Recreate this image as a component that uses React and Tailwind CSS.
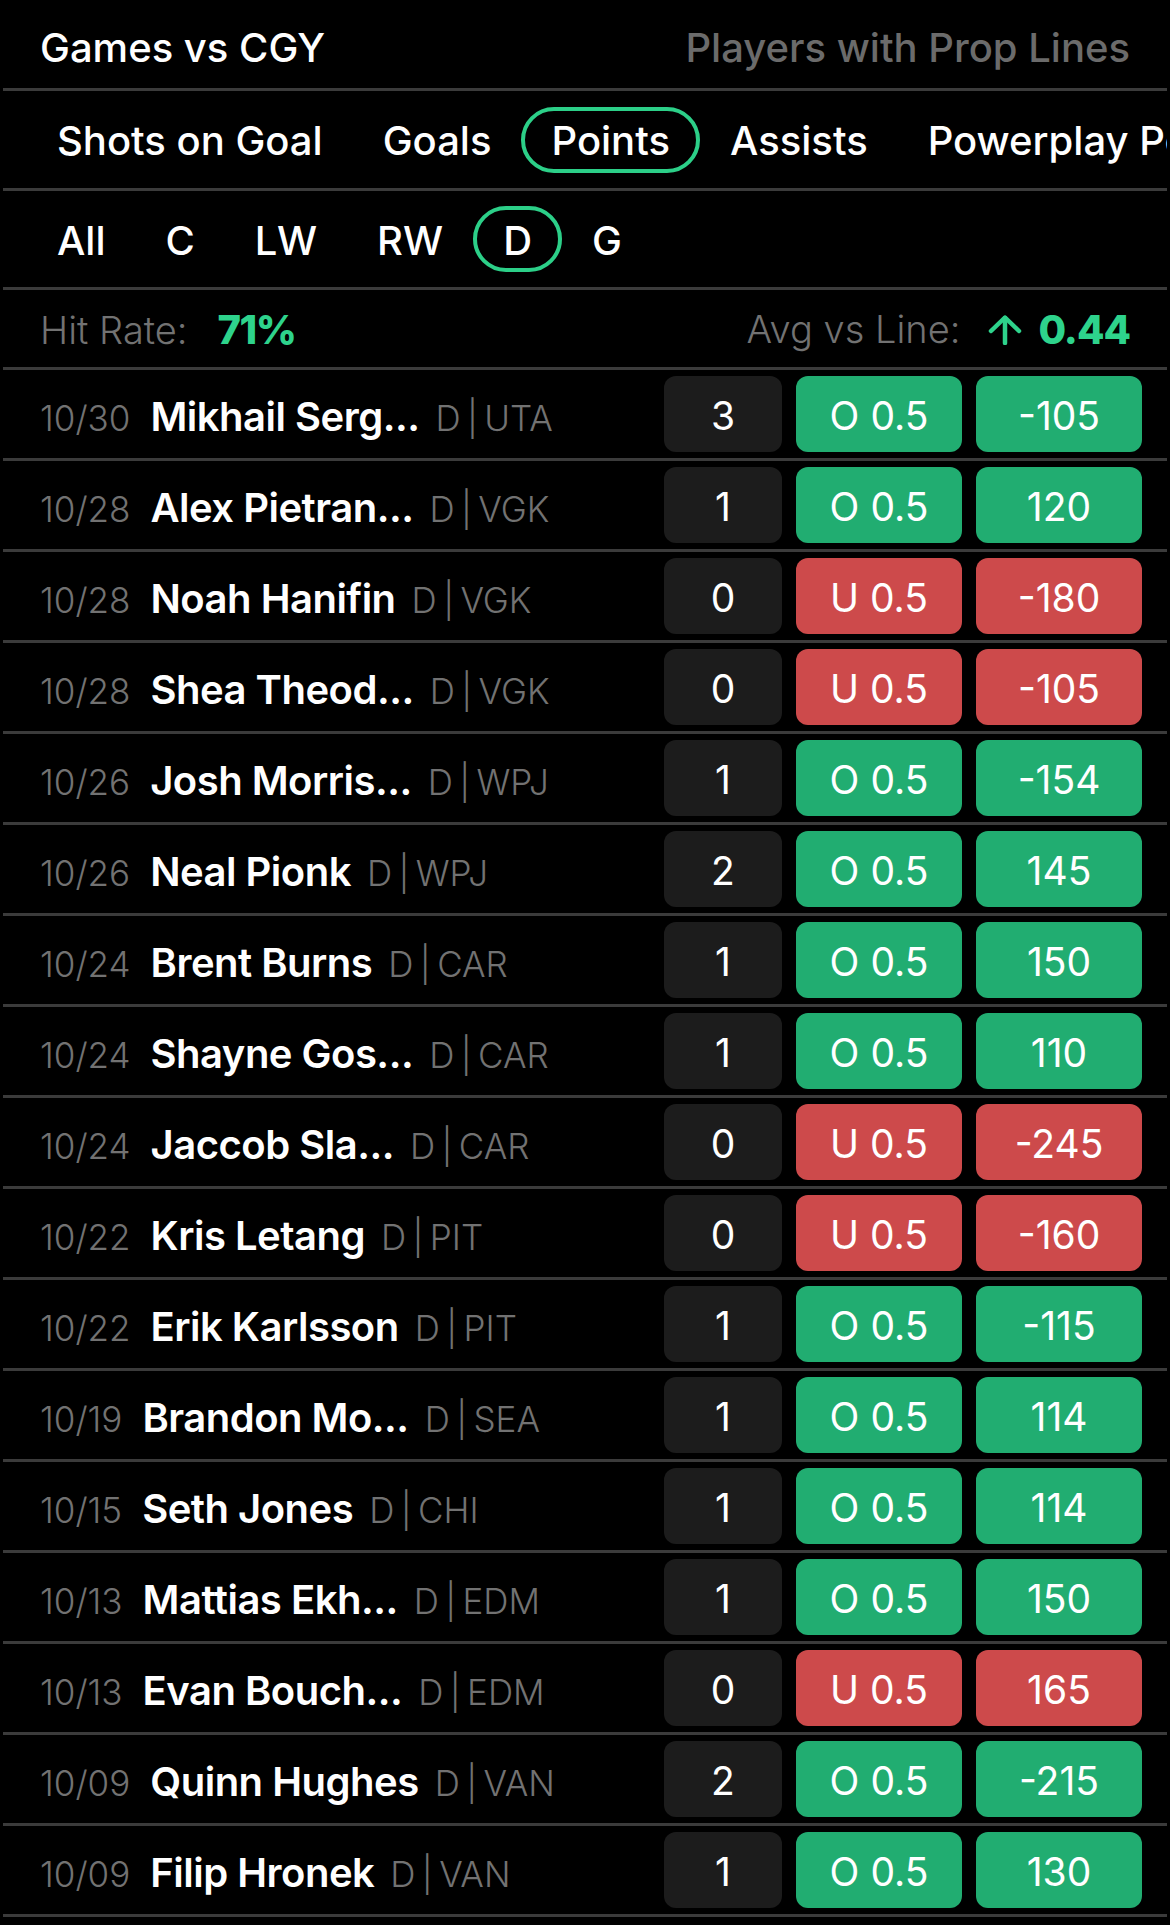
import { useState } from 'react'

const markets = ['Shots on Goal', 'Goals', 'Points', 'Assists', 'Powerplay Points', 'Blocked Shots']
const positions = ['All', 'C', 'LW', 'RW', 'D', 'G']

// one row per game vs CGY; hit = line went the player's way
const games = [
  { date: '10/30', name: 'Mikhail Serg...', team: 'UTA', pts: 3, hit: true, odds: '-105' },
  { date: '10/28', name: 'Alex Pietran...', team: 'VGK', pts: 1, hit: true, odds: '120' },
  { date: '10/28', name: 'Noah Hanifin', team: 'VGK', pts: 0, hit: false, odds: '-180' },
  { date: '10/28', name: 'Shea Theod...', team: 'VGK', pts: 0, hit: false, odds: '-105' },
  { date: '10/26', name: 'Josh Morris...', team: 'WPJ', pts: 1, hit: true, odds: '-154' },
  { date: '10/26', name: 'Neal Pionk', team: 'WPJ', pts: 2, hit: true, odds: '145' },
  { date: '10/24', name: 'Brent Burns', team: 'CAR', pts: 1, hit: true, odds: '150' },
  { date: '10/24', name: 'Shayne Gos...', team: 'CAR', pts: 1, hit: true, odds: '110' },
  { date: '10/24', name: 'Jaccob Sla...', team: 'CAR', pts: 0, hit: false, odds: '-245' },
  { date: '10/22', name: 'Kris Letang', team: 'PIT', pts: 0, hit: false, odds: '-160' },
  { date: '10/22', name: 'Erik Karlsson', team: 'PIT', pts: 1, hit: true, odds: '-115' },
  { date: '10/19', name: 'Brandon Mo...', team: 'SEA', pts: 1, hit: true, odds: '114' },
  { date: '10/15', name: 'Seth Jones', team: 'CHI', pts: 1, hit: true, odds: '114' },
  { date: '10/13', name: 'Mattias Ekh...', team: 'EDM', pts: 1, hit: true, odds: '150' },
  { date: '10/13', name: 'Evan Bouch...', team: 'EDM', pts: 0, hit: false, odds: '165' },
  { date: '10/09', name: 'Quinn Hughes', team: 'VAN', pts: 2, hit: true, odds: '-215' },
  { date: '10/09', name: 'Filip Hronek', team: 'VAN', pts: 1, hit: true, odds: '130' },
]

function ArrowUp() {
  return (
    <svg width="34" height="30" viewBox="0 0 34 30" fill="none" stroke="#2ed38c" strokeWidth="4.5" strokeLinecap="round" strokeLinejoin="round">
      <path d="M17 28V3" />
      <path d="M3 16 17 2.5 31 16" />
    </svg>
  )
}

function Chip({ label, active, onClick }) {
  return (
    <button
      onClick={onClick}
      className={`h-[66px] shrink-0 flex items-center px-[26px] pt-[3px] rounded-full border-[4px] text-[40px] font-medium text-white whitespace-nowrap ${
        active ? 'border-[#2ccf88]' : 'border-transparent'
      }`}
    >
      {label}
    </button>
  )
}

function GameRow({ g }) {
  const tone = g.hit ? 'bg-[#21ad71]' : 'bg-[#cd4a4b]'
  return (
    <div className="h-[91px] border-b-[3px] border-[#3b3b3b] flex items-center pl-[37px] pr-[25px]">
      <div className="flex-1 min-w-0 flex items-baseline whitespace-nowrap pt-[5px]">
        <span className="text-[35px] font-light text-[#727272] mr-[20px]">{g.date}</span>
        <span className="text-[40px] font-semibold text-white tracking-[-0.5px]">{g.name}</span>
        <span className="text-[35px] font-light text-[#727272] ml-[16px]">
          D{'\u2009'}|{'\u2009'}{g.team}
        </span>
      </div>
      <div className="flex gap-[14px] text-[39px] text-white">
        <div className="w-[118px] h-[76px] pt-[4px] rounded-[12px] bg-[#1c1c1c] flex items-center justify-center">{g.pts}</div>
        <div className={`w-[166px] h-[76px] pt-[4px] rounded-[12px] ${tone} flex items-center justify-center`}>
          {g.hit ? 'O' : 'U'} 0.5
        </div>
        <div className={`w-[166px] h-[76px] pt-[4px] rounded-[12px] ${tone} flex items-center justify-center`}>{g.odds}</div>
      </div>
    </div>
  )
}

export default function App() {
  const [market, setMarket] = useState('Points')
  const [pos, setPos] = useState('D')

  return (
    <div className="min-h-[1925px] bg-black font-[Inter,sans-serif] px-[3px]">
      <div className="h-[91px] border-b-[3px] border-[#3b3b3b] flex items-center justify-between px-[37px] pt-[8px]">
        <h1 className="text-[40px] font-medium text-white">Games vs CGY</h1>
        <span className="text-[40px] font-medium text-[#6b6b6b]">Players with Prop Lines</span>
      </div>

      <div className="h-[100px] border-b-[3px] border-[#3b3b3b] flex items-center pl-[24px] overflow-hidden">
        {markets.map((m) => (
          <Chip key={m} label={m} active={market === m} onClick={() => setMarket(m)} />
        ))}
      </div>

      <div className="h-[99px] border-b-[3px] border-[#3b3b3b] flex items-center pl-[24px]">
        {positions.map((p) => (
          <Chip key={p} label={p} active={pos === p} onClick={() => setPos(p)} />
        ))}
      </div>

      <div className="h-[80px] border-b-[3px] border-[#3b3b3b] flex items-center justify-between px-[37px] pt-[2px]">
        <div className="flex items-baseline gap-[30px]">
          <span className="text-[38px] font-light text-[#727272]">Hit Rate:</span>
          <span className="text-[40px] font-extrabold text-[#2ed38c] tracking-[-1.5px]">71%</span>
        </div>
        <div className="flex items-center">
          <span className="text-[38px] font-light text-[#727272] mr-[28px]">Avg vs Line:</span>
          <ArrowUp />
          <span className="text-[40px] font-extrabold text-[#2ed38c] tracking-[-1px] ml-[16px]">0.44</span>
        </div>
      </div>

      {games.map((g, i) => (
        <GameRow key={i} g={g} />
      ))}
    </div>
  )
}
